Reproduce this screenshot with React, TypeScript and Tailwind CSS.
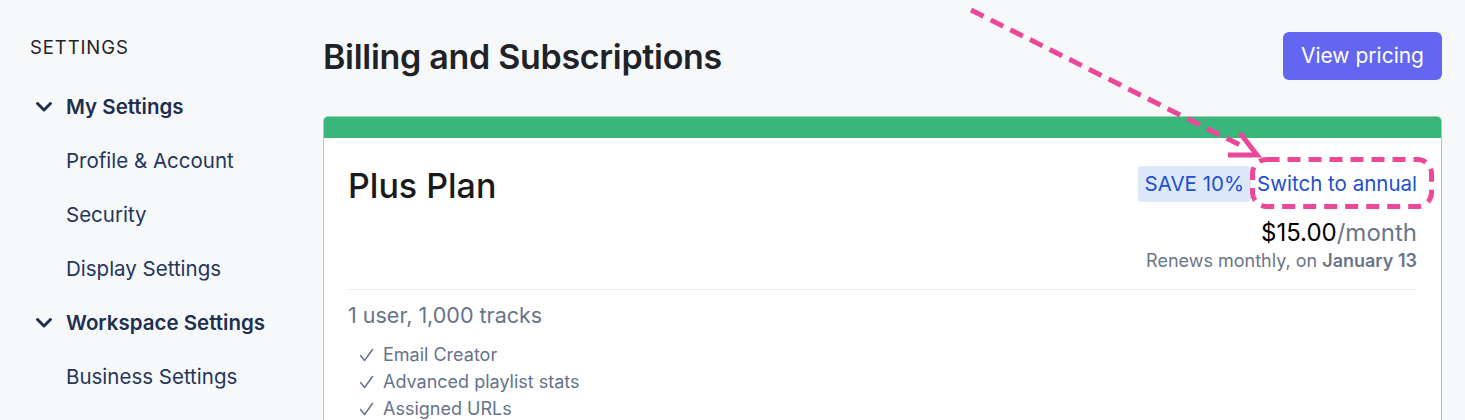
import React from "react";

const navItems = [
  { label: "My Settings", header: true },
  { label: "Profile & Account" },
  { label: "Security" },
  { label: "Display Settings" },
  { label: "Workspace Settings", header: true },
  { label: "Business Settings" },
];

const features = ["Email Creator", "Advanced playlist stats", "Assigned URLs"];

function Chevron() {
  return (
    <svg width="18" height="12" viewBox="0 0 18 12" className="absolute left-[35px]">
      <polyline points="2.5,2.5 9,9 15.5,2.5" fill="none" stroke="#1e2f50" strokeWidth="3" strokeLinecap="round" strokeLinejoin="round" />
    </svg>
  );
}

function Check() {
  return (
    <svg width="15" height="14" viewBox="0 0 15 14" className="mr-[9px]">
      <polyline points="1.5,7.5 5.5,12.5 13.5,1.5" fill="none" stroke="#66738a" strokeWidth="1.5" strokeLinecap="round" strokeLinejoin="round" />
    </svg>
  );
}

function Sidebar() {
  return (
    <aside className="w-[323px] shrink-0 pt-[35px]">
      <div className="pl-[30px] text-[18.5px] leading-[24px] tracking-[0.9px] text-[#1f2328]">SETTINGS</div>
      <nav className="mt-[21px]">
        {navItems.map((item) => (
          <div key={item.label} className="relative flex h-[54px] items-center pl-[66px]">
            {item.header && <Chevron />}
            <span
              className={
                item.header
                  ? "text-[20.5px] font-semibold text-[#1e2f50]"
                  : "text-[20.5px] text-[#24365a]"
              }
            >
              {item.label}
            </span>
          </div>
        ))}
      </nav>
    </aside>
  );
}

function PlanCard() {
  return (
    <div className="mt-[36px] overflow-hidden rounded-[5px] border border-[#9fcfb4] bg-white">
      <div className="h-[21px] bg-[#38b67b]" />
      <div className="px-[24px] pt-[28px]">
        <div className="flex items-start justify-between">
          <h2 className="text-[34px] font-medium leading-[40px] text-[#1a1a1a]">Plus Plan</h2>
          <div className="flex flex-col items-end">
            <div className="flex h-[36px] items-center">
              <span className="flex h-[36px] items-center rounded-[4px] bg-[#dde9fb] px-[7px] text-[20.5px] text-[#1d4fd0]">
                SAVE 10%
              </span>
              <a className="ml-[6px] text-[20.5px] text-[#1d4fd0]">Switch to annual</a>
            </div>
            <div className="mt-[15px] text-[24px] leading-[32px] text-black">
              $15.00<span className="text-[#6b7588]">/month</span>
            </div>
            <div className="text-[18px] leading-[24px] text-[#6b7588]">
              Renews monthly, on <span className="font-semibold">January 13</span>
            </div>
          </div>
        </div>
        <div className="mt-[16px] border-t border-[#ececee]" />
        <div className="mt-[11px] text-[21.5px] leading-[28px] text-[#66738a]">1 user, 1,000 tracks</div>
        <ul className="mt-[12px] pb-[20px]">
          {features.map((f) => (
            <li key={f} className="flex h-[27px] items-center pl-[11px] text-[18px] text-[#66738a]">
              <Check />
              {f}
            </li>
          ))}
        </ul>
      </div>
    </div>
  );
}

export default function App() {
  return (
    <div
      className="relative h-[420px] w-[1465px] overflow-hidden bg-[#f7f8fa]"
      style={{ fontFamily: "Inter, 'Noto Sans', sans-serif" }}
    >
      <div className="flex">
        <Sidebar />
        <main className="flex-1 pr-[23px] pt-[32px]">
          <div className="flex h-[48px] items-center justify-between">
            <h1 className="text-[34px] font-semibold tracking-[-0.3px] text-[#1f2328]">Billing and Subscriptions</h1>
            <button className="h-[48px] rounded-[6px] bg-[#6366f0] px-[18px] text-[21px] text-white">View pricing</button>
          </div>
          <PlanCard />
        </main>
      </div>
      <svg className="pointer-events-none absolute inset-0" width="1465" height="420">
        <line x1="971" y1="10" x2="1246" y2="148" stroke="#ec4899" strokeWidth="5" strokeDasharray="14 8" />
        <polyline points="1240,133 1257,155 1228,155" fill="none" stroke="#ec4899" strokeWidth="5" strokeLinejoin="miter" />
        <rect x="1252.5" y="159.5" width="179" height="47" rx="14" fill="none" stroke="#ec4899" strokeWidth="5" strokeDasharray="13 8" />
      </svg>
    </div>
  );
}
